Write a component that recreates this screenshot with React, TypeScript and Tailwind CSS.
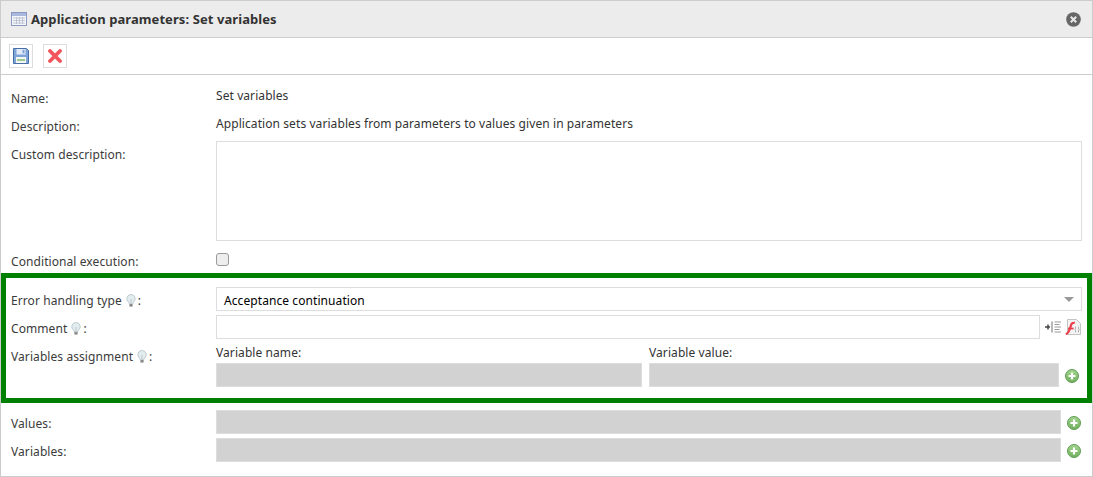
import React from 'react';

const Bulb = () => (
    <svg width="10" height="13" viewBox="0 0 10 13" className="inline-block ml-[4px] mr-[2px] align-[-2px]">
        <path d="M5 .5a4.2 4.2 0 0 0-2.600 7.500c.6.6.8 1.200.8 1.800h3.600c0-.6.2-1.200.8-1.800A4.200 4.200 0 0 0 5 .5z" fill="#e3ecef" stroke="#b4c0c4" strokeWidth=".8" />
        <path d="M5 5v4.500" stroke="#b4c0c4" strokeWidth=".8" />
        <rect x="3.400" y="10" width="3.200" height="2.600" fill="#8a8a8a" />
    </svg>
);

const AddIcon = () => (
    <svg width="14" height="14" viewBox="0 0 14 14" className="shrink-0">
        <defs>
            <linearGradient id="addFill" x1="0" y1="0" x2="0" y2="1">
                <stop offset="0" stopColor="#a5d38f" />
                <stop offset="1" stopColor="#6fb05c" />
            </linearGradient>
        </defs>
        <circle cx="7" cy="7" r="6.500" fill="url(#addFill)" stroke="#5f9e55" />
        <path d="M7 3.500v7M3.500 7h7" stroke="#ffffff" strokeWidth="2.200" />
    </svg>
);

const Label = ({ children }: { children: React.ReactNode }) => (
    <div className="w-[205px] shrink-0 text-[#3b3b3b]">{children}</div>
);

const App: React.FC = () => {
    return (
        <div className="w-[1093px] h-[477px] bg-white border border-[#cccccc] text-[12px] leading-[16px] tracking-[0.08px] text-[#333333] font-['Noto_Sans','DejaVu_Sans',sans-serif] overflow-hidden flex flex-col">
            <div className="h-[37px] bg-[#ececec] border-b border-[#cccccc] flex items-center pl-[10px] pr-[11px] shrink-0">
                <svg width="16" height="14" viewBox="0 0 16 14">
                    <rect x=".5" y=".5" width="15" height="13" fill="#f4f6fa" stroke="#8b99c3" />
                    <rect x="1" y="1" width="14" height="3" fill="#a9b8dc" />
                    <path d="M2 6h12M2 8.500h12M2 11h12M5.500 5v7M8.500 5v7M11.500 5v7" stroke="#b4bbcc" strokeWidth=".8" />
                </svg>
                <span className="ml-[4px] text-[13px] font-bold text-[#333333]">Application parameters: Set variables</span>
                <svg width="15" height="15" viewBox="0 0 15 15" className="ml-auto">
                    <circle cx="7.500" cy="7.500" r="7.300" fill="#666666" />
                    <path d="M4.800 4.800l5.400 5.400M10.200 4.800l-5.400 5.400" stroke="#e8e8e8" strokeWidth="2" />
                </svg>
            </div>
            <div className="h-[37px] border-b border-[#cccccc] flex items-center pl-[8px] gap-[10px] shrink-0">
                <button className="w-[24px] h-[24px] border border-[#dddddd] flex items-center justify-center">
                    <svg width="16" height="16" viewBox="0 0 16 16">
                        <path d="M.5.500h13l2 2v13H.5z" fill="#7fa4d8" stroke="#4a6fa8" />
                        <rect x="3.500" y="1" width="9" height="5.500" fill="#e4ecf7" />
                        <rect x="9.500" y="1.800" width="2" height="3.500" fill="#7fa4d8" />
                        <rect x="3" y="9" width="10" height="6" fill="#f4f6f2" />
                        <rect x="4" y="11" width="8" height="2" fill="#9ccb93" />
                    </svg>
                </button>
                <button className="w-[24px] h-[24px] border border-[#dddddd] flex items-center justify-center">
                    <svg width="14" height="14" viewBox="0 0 14 14">
                        <path d="M2 2l10 10M12 2L2 12" stroke="#f0565c" strokeWidth="3.800" strokeLinecap="round" />
                    </svg>
                </button>
            </div>

            <div className="flex flex-col pl-[10px] pr-[10px] pt-[13px] shrink-0">
                <div className="flex h-[28px]">
                    <Label><span className="block pt-[3px]">Name:</span></Label>
                    <div>Set variables</div>
                </div>
                <div className="flex h-[25px]">
                    <Label><span className="block pt-[3px]">Description:</span></Label>
                    <div>Application sets variables from parameters to values given in parameters</div>
                </div>
                <div className="flex">
                    <Label><span className="block pt-[6px]">Custom description:</span></Label>
                    <div className="w-[866px] h-[100px] border border-[#dddddd]" />
                </div>
                <div className="flex h-[20px] mt-[11px] items-start">
                    <Label><span className="block pt-[2px]">Conditional execution:</span></Label>
                    <input type="checkbox" className="appearance-none w-[13px] h-[13px] mt-[1px] bg-[#eeeeee] border border-[#999999] rounded-[3px]" />
                </div>
            </div>

            <div className="mt-[1px] w-[1091px] h-[130px] border-[5px] border-[#008000] shrink-0 pl-[5px] pt-[9px] pr-[5px]">
                <div className="flex h-[24px]">
                    <Label><span className="block pt-[6px]">Error handling type<Bulb />:</span></Label>
                    <div className="w-[866px] h-[24px] border border-[#dddddd] flex items-center pl-[7px] pr-[7px] text-black">
                        <span className="pt-[4px]">Acceptance continuation</span>
                        <span className="ml-auto w-0 h-0 border-x-[5px] border-x-transparent border-t-[5px] border-t-[#999999]" />
                    </div>
                </div>
                <div className="flex h-[24px] mt-[4px]">
                    <Label><span className="block pt-[6px]">Comment<Bulb />:</span></Label>
                    <div className="w-[824px] h-[24px] border border-[#dddddd]" />
                    <svg width="16" height="12" viewBox="0 0 16 12" className="ml-[5px] mt-[6px]">
                        <path d="M0 6h5M3 3.500v5" stroke="#444444" strokeWidth="1.500" />
                        <path d="M7 .5v11" stroke="#888888" strokeWidth="1.200" />
                        <path d="M9.500 1h6.500M9.500 3.500h5M9.500 6h6.500M9.500 8.500h5M9.500 11h6.500" stroke="#999999" />
                    </svg>
                    <svg width="16" height="16" viewBox="0 0 16 16" className="ml-[4px] mt-[4px]">
                        <path d="M2.500.5h9l4 4v11h-13z" fill="#f3f3f3" stroke="#c4c4c4" />
                        <path d="M.8 15.200c3-1 4.200-5 5.200-9 .4-1.500 1.500-2.700 3.800-2.400" fill="none" stroke="#ea3f4a" strokeWidth="2.200" />
                        <path d="M3 9.500h5.500" stroke="#ea3f4a" strokeWidth="1.800" />
                        <path d="M11 7.500c-1 0 0 2.500-1 3 1 .5 0 3 1 3M13 7.500c1 0 0 2.500 1 3-1 .5 0 3-1 3" fill="none" stroke="#999999" strokeWidth=".8" />
                    </svg>
                </div>
                <div className="flex mt-[4px]">
                    <Label><span className="block pt-[6px]">Variables assignment<Bulb />:</span></Label>
                    <div className="flex flex-col w-[426px]">
                        <div className="h-[20px] pt-[2px]">Variable name:</div>
                        <div className="w-[426px] h-[24px] bg-[#d2d2d2] border border-[#dddddd]" />
                    </div>
                    <div className="flex flex-col ml-[7px] w-[410px]">
                        <div className="h-[20px] pt-[2px]">Variable value:</div>
                        <div className="w-[410px] h-[24px] bg-[#d2d2d2] border border-[#dddddd]" />
                    </div>
                    <div className="ml-[6px] mt-[26px]"><AddIcon /></div>
                </div>
            </div>

            <div className="flex flex-col pl-[10px] pt-[7px] gap-[4px]">
                <div className="flex h-[24px] items-center">
                    <Label><span className="block pt-[4px]">Values:</span></Label>
                    <div className="w-[845px] h-[24px] bg-[#d2d2d2] border border-[#dddddd]" />
                    <div className="ml-[6px] mt-[2px]"><AddIcon /></div>
                </div>
                <div className="flex h-[24px] items-center">
                    <Label><span className="block pt-[4px]">Variables:</span></Label>
                    <div className="w-[845px] h-[24px] bg-[#d2d2d2] border border-[#dddddd]" />
                    <div className="ml-[6px] mt-[2px]"><AddIcon /></div>
                </div>
            </div>
        </div>
    );
};

export default App;
